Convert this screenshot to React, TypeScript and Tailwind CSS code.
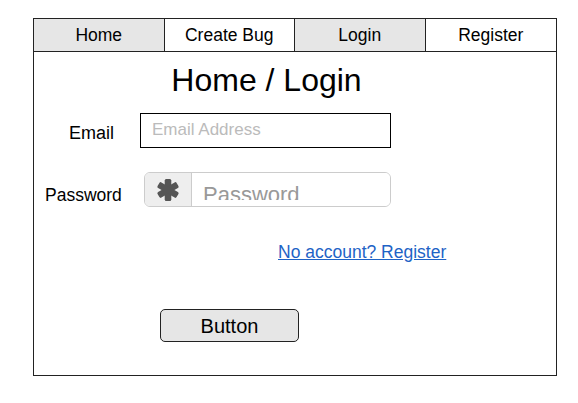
import React from "react";

function Asterisk() {
  return (
    <svg width="24" height="24" viewBox="0 0 24 24">
      <g fill="#555" transform="translate(12 12)">
        <rect x="-3.3" y="-11" width="6.6" height="22" rx="1.5" />
        <rect x="-3.3" y="-11" width="6.6" height="22" rx="1.5" transform="rotate(60)" />
        <rect x="-3.3" y="-11" width="6.6" height="22" rx="1.5" transform="rotate(120)" />
      </g>
    </svg>
  );
}

export default function App() {
  const tabs = [
    { label: "Home", bg: "bg-[#e6e6e6]" },
    { label: "Create Bug", bg: "bg-white" },
    { label: "Login", bg: "bg-[#e6e6e6]" },
    { label: "Register", bg: "bg-white" },
  ];
  return (
    <div
      className="pl-[33px] pt-[18px] bg-white min-h-[403px] text-black"
      style={{ fontFamily: '"Liberation Sans", Arial, sans-serif' }}
    >
      <div className="w-[524px] h-[358px] border border-[#222] flex flex-col">
        <div className="grid grid-cols-4 h-[33px] border-b border-[#222]">
          {tabs.map((t, i) => (
            <div
              key={t.label}
              className={`${t.bg} flex items-center justify-center text-[17.5px] ${
                i < 3 ? "border-r border-[#222]" : ""
              }`}
            >
              {t.label}
            </div>
          ))}
        </div>
        <div className="flex flex-col">
          <div className="mt-[10px] w-[465px] text-center text-[32px] leading-[37px]">
            Home / Login
          </div>
          <div className="mt-[14px] flex items-center h-[35px]">
            <div className="w-[106px] pl-[35px] text-[18px] pt-[6px]">Email</div>
            <div className="w-[251px] h-[35px] border border-black flex items-center pl-[11px] pb-[2px] text-[17px] text-[#bbbbbb]">
              Email Address
            </div>
          </div>
          <div className="mt-[24px] flex items-center h-[35px]">
            <div className="w-[106px] pl-[11px] text-[17.5px] pt-[12px]">Password</div>
            <div className="ml-[4px] w-[247px] h-[35px] border border-[#cccccc] rounded-[6px] flex overflow-hidden">
              <div className="w-[47px] bg-[#eeeeee] border-r border-[#cccccc] flex items-center justify-center">
                <Asterisk />
              </div>
              <div className="flex-1 bg-white">
                <div className="h-[27px] overflow-hidden pt-[5px] pl-[11px] text-[22px] leading-normal text-[#999999]">
                  Password
                </div>
              </div>
            </div>
          </div>
          <div className="mt-[35px] ml-[244px] text-[17.5px] leading-[20px]">
            <a className="text-[#1e63c6] underline cursor-pointer">No account? Register</a>
          </div>
          <div className="mt-[47px] ml-[126px]">
            <button className="w-[139px] h-[33px] border border-[#222] rounded-[5px] bg-[#e6e6e6] text-[20px] leading-none flex items-center justify-center">
              Button
            </button>
          </div>
        </div>
      </div>
    </div>
  );
}
